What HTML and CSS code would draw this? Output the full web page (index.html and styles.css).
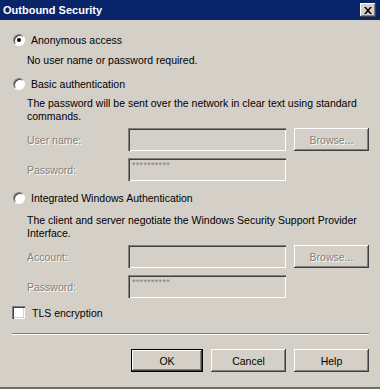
FILE: index.html
```html
<!DOCTYPE html>
<html>
<head>
<meta charset="utf-8">
<link rel="stylesheet" href="styles.css">
</head>
<body>
<div class="window">
  <div class="titlebar">
    <span class="title">Outbound Security</span>
    <span class="close"><svg width="8" height="7" viewBox="0 0 8 7"><path d="M0 0h2l2 2.2L6 0h2L5 3.5 8 7H6L4 4.8 2 7H0l3-3.5z" fill="#000"/></svg></span>
  </div>
  <div class="content">
    <div class="option sp-13"><span class="radio checked"></span><span>Anonymous access</span></div>
    <p class="desc sp-7">No user name or password required.</p>
    <div class="option sp-10"><span class="radio"></span><span>Basic authentication</span></div>
    <p class="desc sp-6">The password will be sent over the network in clear text using standard<br>commands.</p>
    <div class="field sp-5"><span class="label">User name:</span><span class="input"></span><span class="button disabled">Browse...</span></div>
    <div class="field sp-7"><span class="label">Password:</span><span class="input"><span class="mask">**********</span></span></div>
    <div class="option sp-10"><span class="radio"></span><span>Integrated Windows Authentication</span></div>
    <p class="desc sp-9">The client and server negotiate the Windows Security Support Provider<br>Interface.</p>
    <div class="field sp-5"><span class="label">Account:</span><span class="input"></span><span class="button disabled">Browse...</span></div>
    <div class="field sp-7"><span class="label">Password:</span><span class="input"><span class="mask">**********</span></span></div>
    <div class="check-row sp-8"><span class="checkbox"></span><span>TLS encryption</span></div>
    <div class="separator"></div>
    <div class="actions">
      <span class="button default">OK</span>
      <span class="button">Cancel</span>
      <span class="button">Help</span>
    </div>
  </div>
</div>
</body>
</html>
```

FILE: styles.css
```css
html, body {
  margin: 0;
  padding: 0;
  background: #d4d0c8;
}
body {
  font-family: "Liberation Sans", Arial, sans-serif;
  font-size: 10.5px;
  color: #000;
}
.window {
  width: 380px;
  height: 389px;
  box-sizing: border-box;
  background: #d4d0c8;
  display: flex;
  flex-direction: column;
  border-bottom: 2px solid #6f6d69;
}
.titlebar {
  height: 20px;
  flex: none;
  background: #0a246a;
  display: flex;
  align-items: center;
  justify-content: space-between;
  padding: 0 4px 0 3px;
}
.title {
  color: #fff;
  font-weight: bold;
  font-size: 11px;
}
.close {
  width: 16px;
  height: 14px;
  box-sizing: border-box;
  background: #d4d0c8;
  display: flex;
  align-items: center;
  justify-content: center;
  box-shadow: inset -1px -1px #404040, inset 1px 1px #fff, inset -2px -2px #808080;
}
.content {
  padding: 0 11px 0 12px;
  display: flex;
  flex-direction: column;
  white-space: nowrap;
}
.sp-5 { margin-top: 5px; }
.sp-6 { margin-top: 6px; }
.sp-7 { margin-top: 7px; }
.sp-8 { margin-top: 8px; }
.sp-9 { margin-top: 9px; }
.sp-10 { margin-top: 10px; }
.sp-13 { margin-top: 13px; }
.option {
  height: 14px;
  display: flex;
  align-items: center;
  gap: 6px;
  padding-left: 1px;
}
.radio {
  width: 12px;
  height: 12px;
  box-sizing: border-box;
  border-radius: 50%;
  background: #fff;
  border: 1px solid;
  border-color: #808080 #fff #fff #808080;
  box-shadow: inset 1px 1px #404040;
  display: flex;
  align-items: center;
  justify-content: center;
}
.radio.checked::after {
  content: "";
  width: 4px;
  height: 4px;
  border-radius: 50%;
  background: #000;
}
.desc {
  margin-bottom: 0;
  padding-left: 15px;
  line-height: 13px;
}
.field {
  height: 23px;
  display: flex;
  align-items: center;
  padding-left: 15px;
}
.label {
  width: 101px;
  color: #808080;
  text-shadow: 1px 1px #fff;
}
.input {
  width: 158px;
  height: 23px;
  box-sizing: border-box;
  background: #d4d0c8;
  box-shadow: inset 1px 1px #808080, inset 2px 2px #404040, inset -1px -1px #fff, inset -2px -2px #d4d0c8;
  padding: 3px 0 0 4px;
}
.mask {
  display: block;
  font-size: 9px;
  line-height: 8px;
  color: #808080;
  letter-spacing: 0.3px;
}
.button {
  width: 75px;
  height: 23px;
  box-sizing: border-box;
  display: flex;
  align-items: center;
  justify-content: center;
  background: #d4d0c8;
  box-shadow: inset -1px -1px #404040, inset 1px 1px #fff, inset -2px -2px #808080;
}
.field .button {
  margin-left: 8px;
}
.button.disabled {
  color: #808080;
  text-shadow: 1px 1px #fff;
}
.button.default {
  width: 72px;
  box-shadow: inset 0 0 0 1px #000, inset -2px -2px #404040, inset 2px 2px #fff, inset -3px -3px #808080;
}
.check-row {
  height: 13px;
  display: flex;
  align-items: center;
  gap: 7px;
}
.checkbox {
  width: 13px;
  height: 13px;
  box-sizing: border-box;
  background: #fff;
  box-shadow: inset 1px 1px #808080, inset 2px 2px #404040, inset -1px -1px #fff, inset -2px -2px #d4d0c8;
}
.separator {
  margin-top: 14px;
  height: 1px;
  width: 357px;
  background: #808080;
  border-bottom: 1px solid #fff;
}
.actions {
  margin-top: 14px;
  display: flex;
  justify-content: flex-end;
  gap: 8px;
}
.actions .button.default {
  width: 72px;
}
```
